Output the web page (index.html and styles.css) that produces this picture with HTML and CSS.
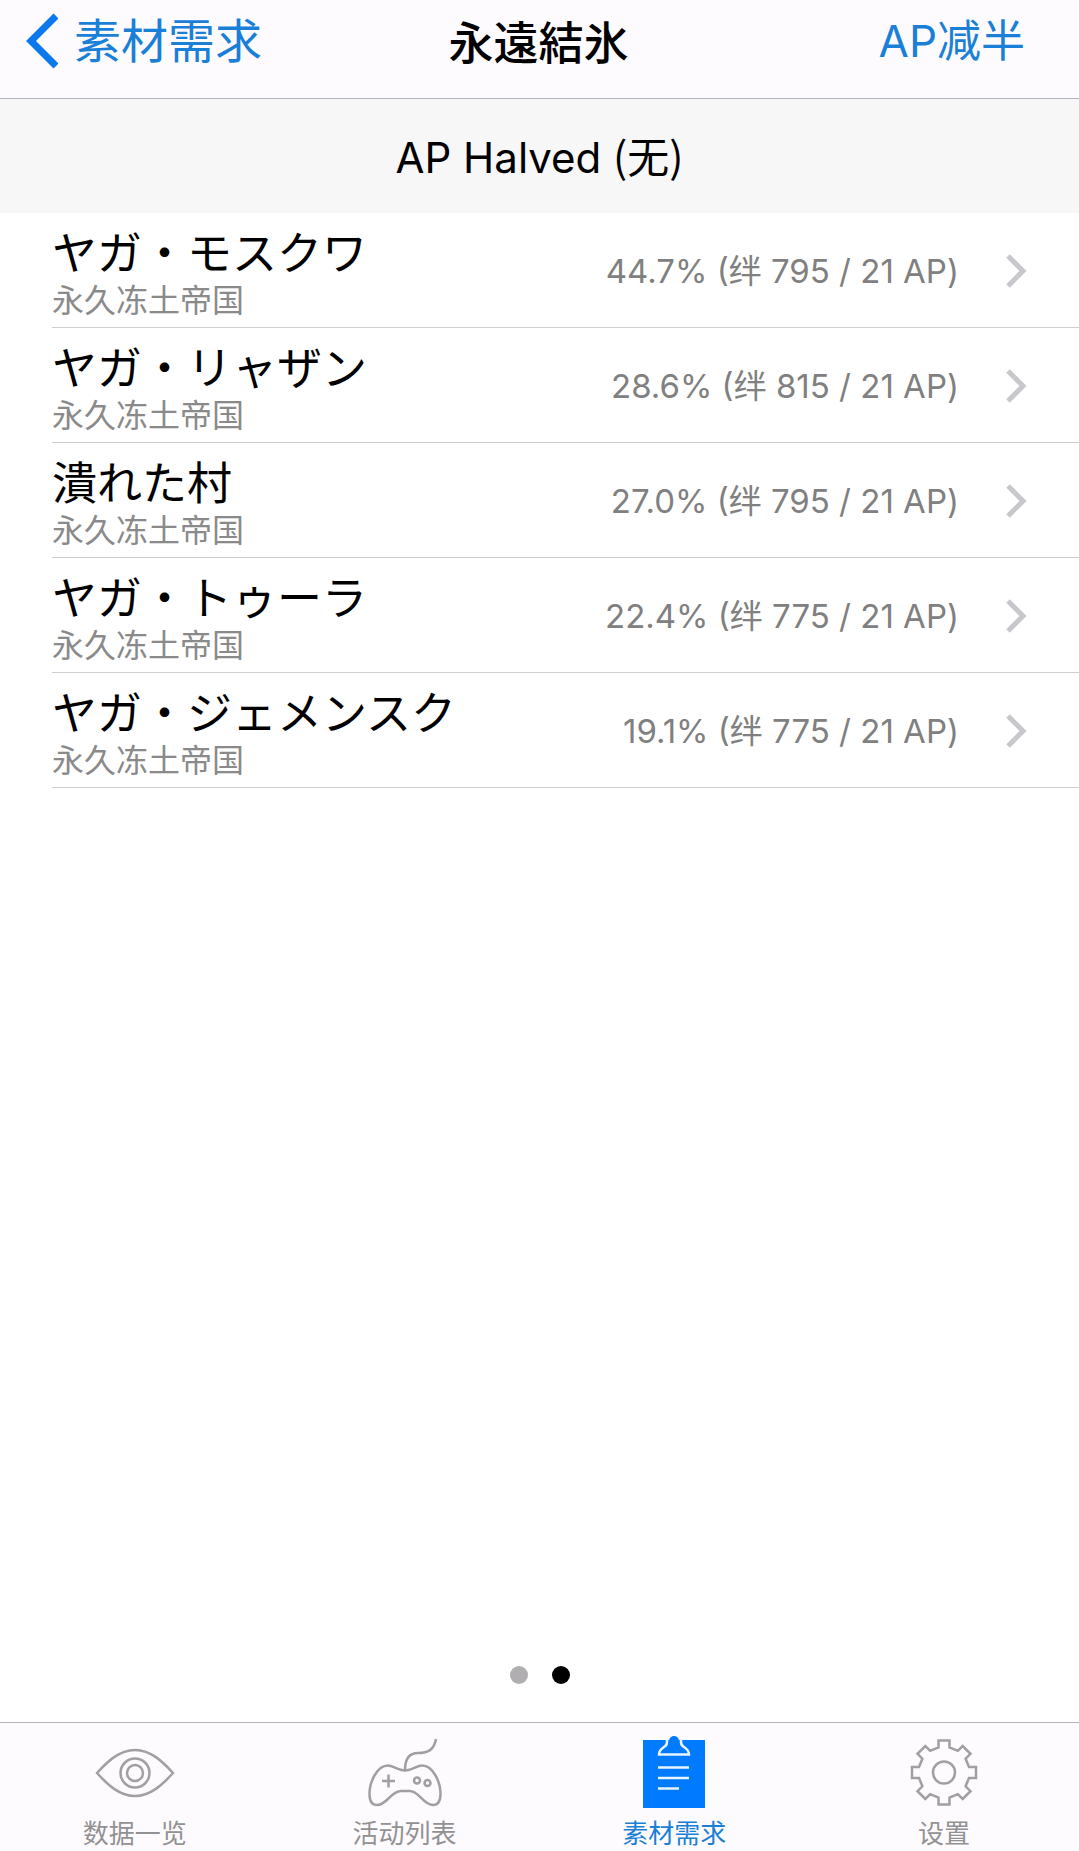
FILE: index.html
```
<!DOCTYPE html>
<html lang="zh-CN">
<head>
  <meta charset="UTF-8">
  <meta name="viewport" content="width=device-width, initial-scale=1">
  <title>永遠結氷</title>
  <link rel="stylesheet" href="styles.css">
</head>
<body>
  <header class="navbar">
    <a href="#" class="back">
      <svg width="32" height="56" viewBox="0 0 32 56"><path d="M30 3L5 28l25 25" fill="none" stroke="#0b78ee" stroke-width="7"/></svg>
      素材需求
    </a>
    <h1 lang="ja">永遠結氷</h1>
    <button type="button" class="nav-action">AP减半</button>
  </header>

  <main>
    <h2 class="section-title">AP Halved <span class="cjk">(无)</span></h2>
    <ul class="quest-list">
      <li>
        <a href="#" class="quest">
          <span class="quest-text">
            <span class="quest-name" lang="ja">ヤガ・モスクワ</span>
            <span class="quest-area">永久冻土帝国</span>
          </span>
          <span class="quest-rate">44.7% (绊 795 / 21 AP)</span>
          <svg class="arrow" width="22" height="36" viewBox="0 0 22 36"><path d="M3 3l15 15L3 33"/></svg>
        </a>
      </li>
      <li>
        <a href="#" class="quest">
          <span class="quest-text">
            <span class="quest-name" lang="ja">ヤガ・リャザン</span>
            <span class="quest-area">永久冻土帝国</span>
          </span>
          <span class="quest-rate">28.6% (绊 815 / 21 AP)</span>
          <svg class="arrow" width="22" height="36" viewBox="0 0 22 36"><path d="M3 3l15 15L3 33"/></svg>
        </a>
      </li>
      <li>
        <a href="#" class="quest">
          <span class="quest-text">
            <span class="quest-name" lang="ja">潰れた村</span>
            <span class="quest-area">永久冻土帝国</span>
          </span>
          <span class="quest-rate">27.0% (绊 795 / 21 AP)</span>
          <svg class="arrow" width="22" height="36" viewBox="0 0 22 36"><path d="M3 3l15 15L3 33"/></svg>
        </a>
      </li>
      <li>
        <a href="#" class="quest">
          <span class="quest-text">
            <span class="quest-name" lang="ja">ヤガ・トゥーラ</span>
            <span class="quest-area">永久冻土帝国</span>
          </span>
          <span class="quest-rate">22.4% (绊 775 / 21 AP)</span>
          <svg class="arrow" width="22" height="36" viewBox="0 0 22 36"><path d="M3 3l15 15L3 33"/></svg>
        </a>
      </li>
      <li>
        <a href="#" class="quest">
          <span class="quest-text">
            <span class="quest-name" lang="ja">ヤガ・ジェメンスク</span>
            <span class="quest-area">永久冻土帝国</span>
          </span>
          <span class="quest-rate">19.1% (绊 775 / 21 AP)</span>
          <svg class="arrow" width="22" height="36" viewBox="0 0 22 36"><path d="M3 3l15 15L3 33"/></svg>
        </a>
      </li>
    </ul>
    <div class="pager">
      <button type="button" class="dot" aria-label="1"></button>
      <button type="button" class="dot active" aria-label="2"></button>
    </div>
  </main>

  <nav class="tabbar">
    <a href="#" class="tab">
      <svg class="tab-icon" viewBox="0 0 80 80">
        <path d="M2 41C12 30 24 18 40 18s28 12 38 23C68 52 56 64 40 64S12 52 2 41z"/>
        <circle cx="40" cy="41" r="14.5"/>
        <circle cx="40" cy="41" r="8"/>
      </svg>
      数据一览
    </a>
    <a href="#" class="tab">
      <svg class="tab-icon" viewBox="0 0 80 80">
        <path d="M40 38c0-11 4-17 13-17C63 21 69 18 71 7"/>
        <path d="M40 38.5C33 38.5 28 33.5 23 33.5C12 33.5 4.500 50 4.500 62C4.500 70 7 73 12 73C22 73 26 59 36 59L45 59C54 59 58 73 68 73C73 73 75.500 70 75.500 62C75.500 50 68 33.500 57 33.500C52 33.500 47 38.500 40 38.500z"/>
        <path d="M17 49h13M23.500 42.500v13"/>
        <circle cx="52" cy="48.500" r="3"/>
        <circle cx="62.500" cy="51" r="3"/>
      </svg>
      活动列表
    </a>
    <a href="#" class="tab active">
      <svg class="tab-icon" viewBox="0 0 80 80">
        <path class="board" d="M9 8h62v68H9z"/>
        <path class="clip" d="M33 7v3c0 3-1 4-3 5c-3 2-5 4-5 7.500h30c0-3.500-2-5.500-5-7.500c-2-1-3-2-3-5V7"/>
        <circle class="board" cx="40" cy="9" r="5"/>
        <path class="clip" d="M24 35.500h31M24 46h31M24 56.500h21"/>
      </svg>
      素材需求
    </a>
    <a href="#" class="tab">
      <svg class="tab-icon" viewBox="0 0 80 80">
        <path transform="translate(40 40.500)" d="M-5.500-32h11v7l8.300 3.400 4.900-4.900 7.800 7.800-4.900 4.900 3.400 8.300h7v11h-7l-3.400 8.300 4.900 4.900-7.800 7.800-4.900-4.900-8.300 3.400v7h-11v-7l-8.300-3.400-4.900 4.900-7.800-7.800 4.900-4.900-3.400-8.300h-7v-11h7l3.400-8.300-4.900-4.900 7.800-7.800 4.900 4.900 8.300-3.400z"/>
        <circle cx="40" cy="40.500" r="11"/>
      </svg>
      设置
    </a>
  </nav>
</body>
</html>
```
FILE: styles.css
```
* {
  box-sizing: border-box;
}
body {
  margin: 0;
  min-height: 100vh;
  display: flex;
  flex-direction: column;
  background: #fff;
  color: #000;
  font-family: Inter, "Noto Sans CJK SC", sans-serif;
}
h1, h2, ul {
  margin: 0;
  padding: 0;
}
a {
  color: inherit;
  text-decoration: none;
}
button {
  border: none;
  padding: 0;
  background: none;
  font-family: inherit;
  cursor: pointer;
}
[lang="ja"] {
  font-family: "Noto Sans CJK JP", sans-serif;
}
.cjk {
  font-family: "Noto Sans CJK SC", sans-serif;
}

/* top bar */
.navbar {
  display: grid;
  grid-template-columns: 1fr auto 1fr;
  align-items: center;
  padding: 10px 54px 26px 26px;
  background: #fefbff;
  border-bottom: 1px solid #b5b3b9;
}
.navbar h1 {
  font-size: 45px;
  line-height: 62px;
  font-weight: 500;
  margin-left: 26px;
}
.back {
  display: flex;
  align-items: center;
  gap: 16px;
  font-size: 47px;
  line-height: 62px;
  color: #1a7fd6;
}
.nav-action {
  justify-self: end;
  font-size: 44px;
  line-height: 62px;
  color: #1a7fd6;
}

/* quest list */
main {
  flex: 1;
  display: flex;
  flex-direction: column;
}
.section-title {
  padding: 26px 0 25px;
  background: #f7f7f7;
  font-size: 42px;
  line-height: 60px;
  font-weight: 400;
  text-align: center;
}
.quest-list {
  flex: 1;
  list-style: none;
  padding-left: 52px;
}
.quest {
  display: flex;
  align-items: center;
  padding: 8px 52px 6px 0;
  border-bottom: 1px solid #cfcfd1;
}
.quest-text {
  flex: 1;
  display: flex;
  flex-direction: column;
}
.quest-name {
  font-size: 45px;
  line-height: 60px;
}
.quest-area {
  font-size: 32px;
  line-height: 40px;
  color: #8a8a8a;
}
.quest-rate {
  font-size: 33px;
  line-height: 48px;
  color: #808080;
}
.arrow {
  margin-left: 46px;
  fill: none;
  stroke: #c7c7cc;
  stroke-width: 5;
}

.pager {
  display: flex;
  justify-content: center;
  gap: 24px;
  padding-bottom: 38px;
}
.dot {
  width: 18px;
  height: 18px;
  border-radius: 50%;
  background: #b0aeb0;
}
.dot.active {
  background: #000;
}

/* bottom tabs */
.tabbar {
  display: grid;
  grid-template-columns: repeat(4, 1fr);
  background: #fefbff;
  border-top: 1px solid #b5b3b9;
}
.tab {
  display: flex;
  flex-direction: column;
  align-items: center;
  gap: 7px;
  padding: 9px 0 2px;
  font-size: 26px;
  line-height: 30px;
  color: #929292;
}
.tab.active {
  color: #1a7fd6;
}
.tab-icon {
  width: 80px;
  height: 80px;
  fill: none;
  stroke: #a0a0a2;
  stroke-width: 2.5;
}
.tab-icon .board {
  fill: #007aff;
  stroke: none;
}
.tab-icon .clip {
  stroke: #e8f4ff;
  stroke-width: 2.5;
}
```
